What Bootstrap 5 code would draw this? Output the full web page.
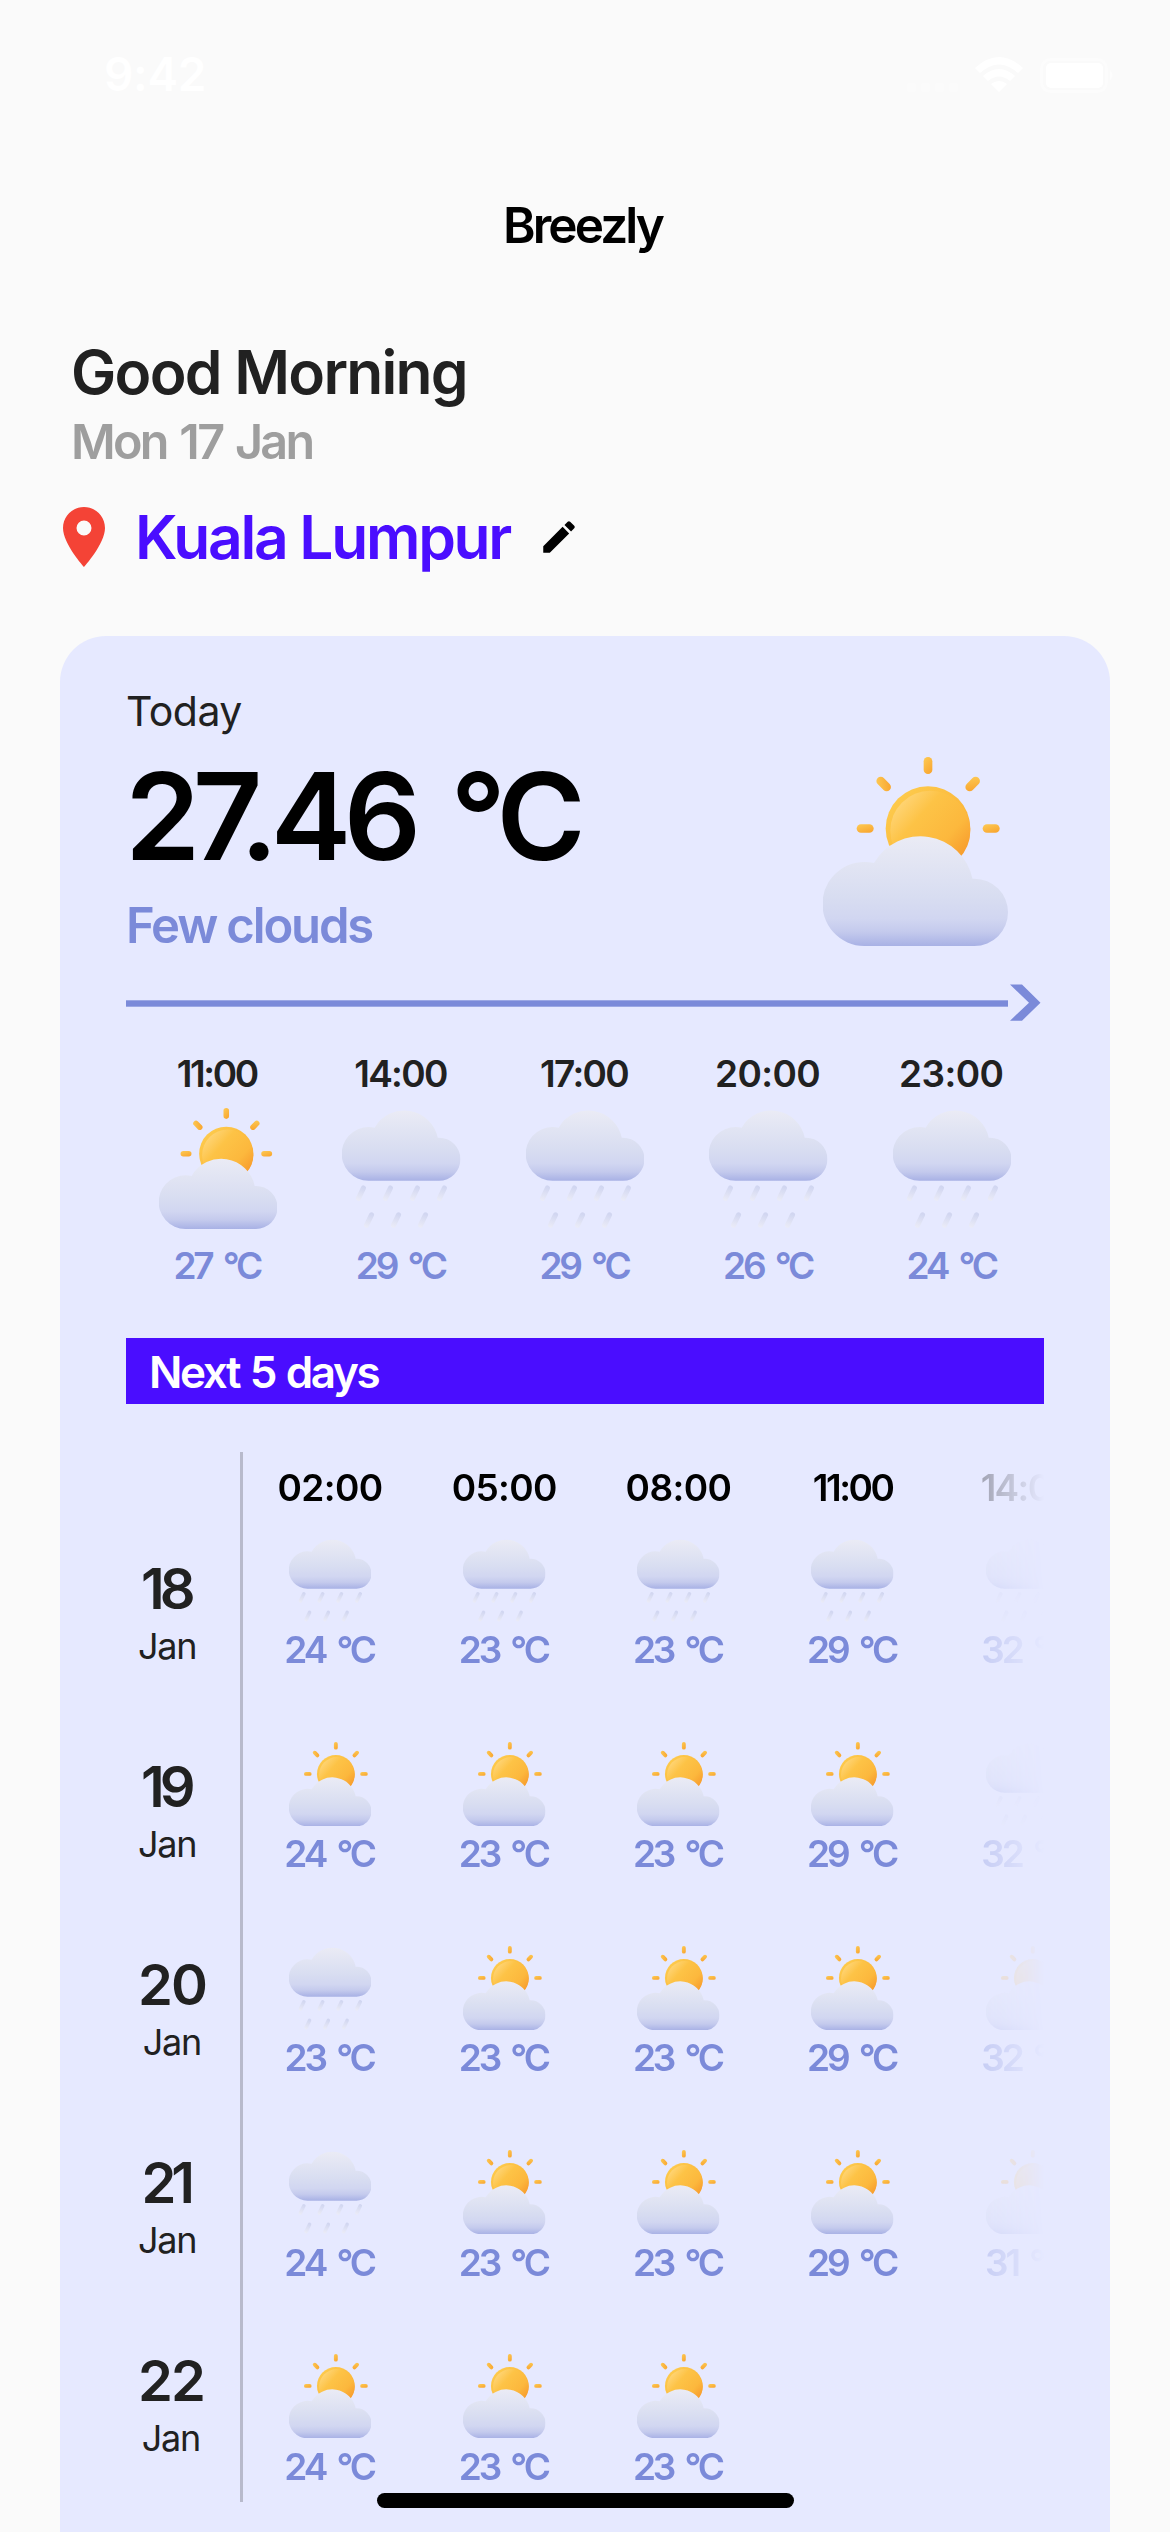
<!DOCTYPE html>
<html lang="en">
<head>
<meta charset="utf-8">
<meta name="viewport" content="width=device-width, initial-scale=1">
<title>Breezly</title>
<link href="https://cdn.jsdelivr.net/npm/bootstrap@5.3.0/dist/css/bootstrap.min.css" rel="stylesheet">
<script src="https://cdn.jsdelivr.net/npm/bootstrap@5.3.0/dist/js/bootstrap.bundle.min.js"></script>
<style>
  body { font-family: Inter, "Liberation Sans", sans-serif; background: #fafafa; color: #000; font-weight: 600; }
  .app { width: 1170px; height: 2532px; overflow: hidden; position: relative; white-space: nowrap; }
  .statusbar { height: 149px; padding: 0 55px 0 104px; color: #fff; font-size: 46px; letter-spacing: -.3px; }
  .titlebar { height: 152px; padding-right: 5px; font-size: 49.5px; letter-spacing: -2.9px; }
  .greeting { padding: 34px 0 0 71px; }
  .hello { font-size: 60.5px; line-height: 74px; letter-spacing: -1.75px; color: #212121; }
  .date { font-size: 48.5px; line-height: 66px; letter-spacing: -2.7px; word-spacing: 3px; color: #9e9e9e; }
  .place { padding-left: 48px; margin-top: 26px; height: 72px; }
  .city { font-size: 60.5px; line-height: 72px; letter-spacing: -2.3px; color: #4a0dff; margin: 0 28px 0 15px; }
  .forecast { margin: 63px 60px 0; padding: 50px 66px 0; height: 1950px; border-radius: 46px 46px 0 0; background: #e6e9ff; }
  .label-today { font-size: 41px; line-height: 50px; letter-spacing: -.5px; font-weight: 400; color: #212121; }
  .bigtemp { font-size: 121px; line-height: 160px; letter-spacing: -7.6px; word-spacing: 14px; margin-left: -1px; }
  .summary { font-size: 49px; line-height: 58px; padding-top: 1px; letter-spacing: -2.15px; color: #7b8ad9; }
  .hero { width: 185px; height: 189px; margin: 71px 36px 0 0; }
  .arrow { margin-top: 29px; }
  .hour { flex: 1 1 0; }
  .clock, .deg { font-size: 37px; line-height: 44px; letter-spacing: -1.7px; }
  .clock.narrow { letter-spacing: -2.4px; }
  .clock.wide { letter-spacing: -.6px; }
  .deg { color: #7b8ad9; letter-spacing: -3.1px; word-spacing: 5px; padding-right: 2px; }
  .hourly { margin-top: 30.5px; }
  .hourly .clock { color: #212121; }
  .hourly svg { width: 118.5px; height: 121px; margin: 12px 0 15px; }
  .hour .clock { padding-right: 2px; }
  .banner { margin-top: 50px; height: 66px; padding: 2px 0 0 23px; background: #4a0dff; color: #fff; font-size: 44px; letter-spacing: -2.4px; word-spacing: 2px; }
  .schedule { margin-top: 48px; height: 1050px; }
  .days { width: 114px; padding: 107px 0 0 12px; color: #212121; }
  .day { flex: 0 0 198.2px; }
  .num { font-size: 56px; line-height: 60px; letter-spacing: -2px; }
  .num.narrow { letter-spacing: -5px; margin-left: -3px; }
  .mon { font-size: 36px; line-height: 54px; letter-spacing: -1.2px; font-weight: 400; }
  .rail { width: 3px; background: #b8bacc; }
  .slots { width: 801px; overflow: hidden;
    -webkit-mask-image: linear-gradient(90deg, #000 700px, rgba(0,0,0,.32) 732px, transparent 801px);
    mask-image: linear-gradient(90deg, #000 700px, rgba(0,0,0,.32) 732px, transparent 801px); }
  .slot { flex: 0 0 174.2px; padding-top: 14px; }
  .slot .clock { margin-bottom: 28px; }
  .cell { height: 204.1px; }
  .cell svg { width: 82.5px; height: 84.3px; margin-bottom: 6.5px; flex: none; }
  .homebar { position: absolute; left: 377px; top: 2493px; width: 417px; height: 15px; border-radius: 8px; background: #000; }
</style>
</head>
<body>
<svg width="0" height="0" class="position-absolute" aria-hidden="true">
  <defs>
    <linearGradient id="ray" x1="0" y1="0" x2=".6" y2="1"><stop offset="0" stop-color="#fdcb55"/><stop offset="1" stop-color="#f9a832"/></linearGradient>
    <linearGradient id="rim" x1="0" y1="0" x2="1" y2="1"><stop offset="0" stop-color="#fecf50"/><stop offset=".6" stop-color="#fbb83c"/><stop offset=".85" stop-color="#f89a2b"/><stop offset="1" stop-color="#f7922a"/></linearGradient>
    <linearGradient id="disc" x1=".05" y1=".1" x2=".95" y2=".9"><stop offset="0" stop-color="#ffd982"/><stop offset=".32" stop-color="#fdc346"/><stop offset=".68" stop-color="#fcb83d"/><stop offset=".95" stop-color="#f79a2c"/></linearGradient>
    <linearGradient id="puff" gradientUnits="userSpaceOnUse" x1="0" y1="321" x2="0" y2="648"><stop offset="0" stop-color="#eaebf5"/><stop offset=".55" stop-color="#d8ddf1"/><stop offset=".75" stop-color="#d1d6f1"/><stop offset=".87" stop-color="#c4caed"/><stop offset="1" stop-color="#a8b1e5"/></linearGradient>
    <linearGradient id="drop" gradientUnits="userSpaceOnUse" x1="10" y1="-30" x2="-10" y2="34"><stop offset="0" stop-color="#d1d6f1"/><stop offset="1" stop-color="#eaebf7"/></linearGradient>
    <path id="cloud" fill="url(#puff)" d="M252 648A126 126 0 1 1 280 399.3A160 160 0 0 1 575.5 446.2L581 446A101 101 0 0 1 581 648Z"/>
    <path id="drip" d="M11 -24L-12 24" stroke="url(#drop)" stroke-width="24" stroke-linecap="round"/>
    <symbol id="sunny" viewBox="127 81 555 567">
      <g fill="url(#ray)">
        <rect x="429" y="81" width="26" height="51" rx="13"/>
        <rect x="228" y="282.500" width="51" height="26" rx="13"/>
        <rect x="606" y="282.500" width="51" height="26" rx="13"/>
        <rect x="296" y="136.500" width="26" height="51" rx="13" transform="rotate(-45 309 162)"/>
        <rect x="563" y="136.500" width="26" height="51" rx="13" transform="rotate(45 576 162)"/>
      </g>
      <circle cx="442" cy="295.500" r="127" fill="url(#rim)"/>
      <circle cx="449" cy="302" r="120" fill="url(#disc)"/>
      <use href="#cloud"/>
    </symbol>
    <symbol id="rainy" viewBox="127 81 555 567">
      <use href="#cloud" y="-226"/>
      <use href="#drip" x="216" y="480"/><use href="#drip" x="342.500" y="480"/><use href="#drip" x="469" y="480"/><use href="#drip" x="595.500" y="480"/>
      <use href="#drip" x="254" y="606"/><use href="#drip" x="380.500" y="606"/><use href="#drip" x="507" y="606"/>
    </symbol>
  </defs>
</svg>

<main class="app">
  <header class="statusbar d-flex align-items-center justify-content-between">
    <span>9:42</span>
    <svg width="208" height="38" viewBox="907 55 208 38" fill="#fff">
      <g opacity=".35"><rect x="907" y="82" width="9" height="9" rx="2"/><rect x="921" y="82" width="9" height="9" rx="2"/><rect x="935" y="82" width="9" height="9" rx="2"/><rect x="949" y="82" width="9" height="9" rx="2"/></g>
      <path d="M975 67Q999 45 1023 67L1018 72Q999 55 980 72Z"/><path d="M983 75Q999 61 1015 75L1010 80Q999 71 988 80Z"/><path d="M991 83Q999 77 1007 83L999 91Z"/>
      <rect x="1041.500" y="58.500" width="65" height="32" rx="9" fill="none" stroke="#fff" stroke-width="3" opacity=".4"/>
      <rect x="1046" y="62" width="57" height="25" rx="5"/><path d="M1110 69Q1115 74.500 1110 80Z" opacity=".5"/>
    </svg>
  </header>

  <div class="titlebar d-flex align-items-center justify-content-center">Breezly</div>

  <section class="greeting">
    <div class="hello">Good Morning</div>
    <div class="date">Mon 17 Jan</div>
  </section>
  <div class="place d-flex align-items-center">
    <svg width="72" height="72" viewBox="0 0 24 24" fill="#f44336"><path d="M12 2C8.130 2 5 5.130 5 9c0 5.250 7 13 7 13s7-7.750 7-13c0-3.870-3.130-7-7-7zm0 9.500a2.500 2.500 0 0 1 0-5 2.500 2.500 0 0 1 0 5z"/></svg>
    <span class="city">Kuala Lumpur</span>
    <svg width="42" height="42" viewBox="0 0 24 24"><path d="M3 17.250V21h3.750L17.810 9.940l-3.750-3.750L3 17.250zM20.710 7.040a1 1 0 0 0 0-1.410l-2.340-2.340a1 1 0 0 0-1.410 0l-1.830 1.830 3.750 3.750 1.830-1.830z"/></svg>
  </div>

  <section class="forecast">
    <div class="d-flex justify-content-between align-items-start">
      <div>
        <div class="label-today">Today</div>
        <div class="bigtemp">27.46 °C</div>
        <div class="summary">Few clouds</div>
      </div>
      <svg class="hero"><use href="#sunny"/></svg>
    </div>

    <svg class="arrow d-block" width="918" height="37" viewBox="0 0 918 37" fill="#7b8ad9"><rect y="16.300" width="882" height="6.400"/><path d="M884 .500H896L914.500 18.700L896 36.700H884L903 18.700Z"/></svg>

    <div class="hourly d-flex text-center">
      <div class="hour"><div class="clock narrow">11:00</div><svg class="d-block mx-auto"><use href="#sunny"/></svg><div class="deg">27 °C</div></div>
      <div class="hour"><div class="clock">14:00</div><svg class="d-block mx-auto"><use href="#rainy"/></svg><div class="deg">29 °C</div></div>
      <div class="hour"><div class="clock">17:00</div><svg class="d-block mx-auto"><use href="#rainy"/></svg><div class="deg">29 °C</div></div>
      <div class="hour"><div class="clock wide">20:00</div><svg class="d-block mx-auto"><use href="#rainy"/></svg><div class="deg">26 °C</div></div>
      <div class="hour"><div class="clock wide">23:00</div><svg class="d-block mx-auto"><use href="#rainy"/></svg><div class="deg">24 °C</div></div>
    </div>

    <div class="banner d-flex align-items-center">Next 5 days</div>

    <div class="schedule d-flex">
      <div class="days d-flex flex-column align-items-start">
        <div class="day text-center"><div class="num narrow">18</div><div class="mon">Jan</div></div>
        <div class="day text-center"><div class="num narrow">19</div><div class="mon">Jan</div></div>
        <div class="day text-center"><div class="num">20</div><div class="mon">Jan</div></div>
        <div class="day text-center"><div class="num narrow">21</div><div class="mon">Jan</div></div>
        <div class="day text-center"><div class="num">22</div><div class="mon">Jan</div></div>
      </div>
      <div class="rail"></div>
      <div class="slots d-flex">
        <div class="slot">
          <div class="clock wide text-center">02:00</div>
          <div class="cell d-flex flex-column align-items-center"><svg><use href="#rainy"/></svg><div class="deg">24 °C</div></div>
          <div class="cell d-flex flex-column align-items-center"><svg><use href="#sunny"/></svg><div class="deg">24 °C</div></div>
          <div class="cell d-flex flex-column align-items-center"><svg><use href="#rainy"/></svg><div class="deg">23 °C</div></div>
          <div class="cell d-flex flex-column align-items-center"><svg><use href="#rainy"/></svg><div class="deg">24 °C</div></div>
          <div class="cell d-flex flex-column align-items-center"><svg><use href="#sunny"/></svg><div class="deg">24 °C</div></div>
        </div>
        <div class="slot">
          <div class="clock wide text-center">05:00</div>
          <div class="cell d-flex flex-column align-items-center"><svg><use href="#rainy"/></svg><div class="deg">23 °C</div></div>
          <div class="cell d-flex flex-column align-items-center"><svg><use href="#sunny"/></svg><div class="deg">23 °C</div></div>
          <div class="cell d-flex flex-column align-items-center"><svg><use href="#sunny"/></svg><div class="deg">23 °C</div></div>
          <div class="cell d-flex flex-column align-items-center"><svg><use href="#sunny"/></svg><div class="deg">23 °C</div></div>
          <div class="cell d-flex flex-column align-items-center"><svg><use href="#sunny"/></svg><div class="deg">23 °C</div></div>
        </div>
        <div class="slot">
          <div class="clock wide text-center">08:00</div>
          <div class="cell d-flex flex-column align-items-center"><svg><use href="#rainy"/></svg><div class="deg">23 °C</div></div>
          <div class="cell d-flex flex-column align-items-center"><svg><use href="#sunny"/></svg><div class="deg">23 °C</div></div>
          <div class="cell d-flex flex-column align-items-center"><svg><use href="#sunny"/></svg><div class="deg">23 °C</div></div>
          <div class="cell d-flex flex-column align-items-center"><svg><use href="#sunny"/></svg><div class="deg">23 °C</div></div>
          <div class="cell d-flex flex-column align-items-center"><svg><use href="#sunny"/></svg><div class="deg">23 °C</div></div>
        </div>
        <div class="slot">
          <div class="clock narrow text-center">11:00</div>
          <div class="cell d-flex flex-column align-items-center"><svg><use href="#rainy"/></svg><div class="deg">29 °C</div></div>
          <div class="cell d-flex flex-column align-items-center"><svg><use href="#sunny"/></svg><div class="deg">29 °C</div></div>
          <div class="cell d-flex flex-column align-items-center"><svg><use href="#sunny"/></svg><div class="deg">29 °C</div></div>
          <div class="cell d-flex flex-column align-items-center"><svg><use href="#sunny"/></svg><div class="deg">29 °C</div></div>
        </div>
        <div class="slot">
          <div class="clock text-center">14:00</div>
          <div class="cell d-flex flex-column align-items-center"><svg><use href="#rainy"/></svg><div class="deg">32 °C</div></div>
          <div class="cell d-flex flex-column align-items-center"><svg><use href="#rainy"/></svg><div class="deg">32 °C</div></div>
          <div class="cell d-flex flex-column align-items-center"><svg><use href="#sunny"/></svg><div class="deg">32 °C</div></div>
          <div class="cell d-flex flex-column align-items-center"><svg><use href="#sunny"/></svg><div class="deg">31 °C</div></div>
        </div>
      </div>
    </div>
  </section>
  <div class="homebar"></div>
</main>
</body>
</html>
